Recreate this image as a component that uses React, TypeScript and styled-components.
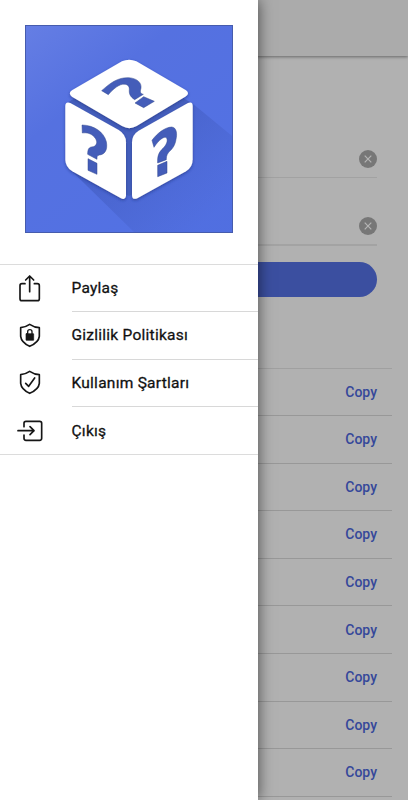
import React from "react";
import styled, { createGlobalStyle } from "styled-components";

const GlobalStyle = createGlobalStyle`
  * { box-sizing: border-box; }
  body { margin: 0; background: #b2b2b2; font-family: Roboto, sans-serif; overflow: hidden; }
`;

const Screen = styled.div`
  position: relative;
  width: 408px;
  height: 800px;
  overflow: hidden;
  background: #b1b1b1;
`;

const Header = styled.header`
  height: 56px;
  background: #ababab;
  box-shadow: 0 1px 3px rgba(0, 0, 0, 0.42);
`;

const Form = styled.section`
  padding: 0 31px;
`;

const Field = styled.div<{ $height: number; $strong?: boolean }>`
  display: flex;
  align-items: flex-end;
  justify-content: flex-end;
  height: ${(p) => p.$height}px;
  padding-bottom: ${(p) => (p.$strong ? 9 : 9)}px;
  border-bottom: ${(p) => (p.$strong ? "2px solid #a3a3a3" : "1px solid #a2a2a2")};
`;

const ClearButton = styled.button`
  display: flex;
  width: 18px;
  height: 18px;
  padding: 0;
  border: 0;
  border-radius: 50%;
  background: #777;
`;

const SubmitButton = styled.button`
  display: block;
  width: 100%;
  height: 35.5px;
  margin-top: 15.5px;
  padding: 0;
  border: 0;
  border-radius: 18px;
  background: #3b4fa0;
`;

const Results = styled.ul`
  list-style: none;
  margin: 71px 16px 0;
  padding: 0;
  border-top: 1px solid #a0a0a0;
`;

const ResultRow = styled.li`
  display: flex;
  align-items: center;
  justify-content: flex-end;
  height: 47.6px;
  padding: 0 15px 0 0;
  border-bottom: 1px solid #989898;

  &:first-child {
    height: 47px;
  }
`;

const CopyButton = styled.button`
  padding: 0;
  border: 0;
  background: none;
  color: #35489a;
  font: 500 14px/20px Roboto, sans-serif;
`;

const Drawer = styled.aside`
  position: absolute;
  top: 0;
  left: 0;
  width: 258px;
  height: 100%;
  background: #fff;
  box-shadow: 0 0 14px rgba(0, 0, 0, 0.6);
`;

const LogoFrame = styled.div`
  display: flex;
  padding: 25px 25px 31px;
`;

const Menu = styled.nav`
  border-top: 1px solid #dcdcdc;
  border-bottom: 1px solid #dcdcdc;
`;

const MenuItem = styled.a`
  display: flex;
  align-items: center;
  height: 47.6px;
  padding-left: 15px;
  color: #111;

  &:first-child {
    height: 47px;
  }

  &:last-child {
    height: 46.8px;
  }
`;

const MenuLabel = styled.span`
  display: flex;
  flex: 1;
  align-items: center;
  align-self: stretch;
  margin-left: 26.5px;
  font-size: 15.5px;
  font-weight: 400;
  letter-spacing: 0.25px;
  -webkit-text-stroke: 0.3px #111;
  ${MenuItem}:not(:last-child) > & {
    border-bottom: 1px solid #d8d8d8;
  }
`;

const MenuIcon = styled.svg`
  width: 30px;
  height: 30px;
  fill: none;
  stroke: #161616;
  stroke-width: 5;
  stroke-linecap: round;
  stroke-linejoin: round;
`;

const CloseGlyph = () => (
  <svg width="18" height="18" viewBox="0 0 18 18" fill="none" stroke="#b5b5b5" strokeWidth="1.2">
    <path d="M5.7 5.7 12.3 12.3M12.3 5.7 5.7 12.3" />
  </svg>
);

const CubeLogo = () => (
  <svg width="208" height="208" viewBox="15 15 624 624">
    <defs>
      <linearGradient id="sky" x1="0" y1="0" x2="0.8" y2="1">
        <stop offset="0" stopColor="#657ee4" />
        <stop offset="0.35" stopColor="#5571e0" />
        <stop offset="1" stopColor="#5271e4" />
      </linearGradient>
      <linearGradient id="cast" gradientUnits="userSpaceOnUse" x1="330" y1="350" x2="560" y2="600">
        <stop offset="0" stopColor="#354da8" stopOpacity="0.4" />
        <stop offset="1" stopColor="#4057b8" stopOpacity="0.08" />
      </linearGradient>
      <filter id="lift" x="-10%" y="-10%" width="120%" height="125%">
        <feDropShadow dx="0" dy="4" stdDeviation="4" floodColor="#1c3180" floodOpacity="0.65" />
      </filter>
    </defs>
    <rect x="15" y="15" width="624" height="624" fill="url(#sky)" />
    <path d="M142 440 345 639H639V350L515 248Z" fill="url(#cast)" />
    <path d="M145 246 327 140 510 246V430L327 528 145 430Z" fill="#4660bd" />
    <g fill="#fff" filter="url(#lift)">
      <path d="M306 124Q327 114 349 124L498 211Q510 220 498 229L350 318Q328 331 306 318L156 230Q143 220 156 211Z" />
      <path d="M136 257Q137 244 151 249L296 330Q318 343 318 367V526Q317 541 303 535L157 454Q137 442 136 420Z" />
      <path d="M504 249Q518 244 518 258V418Q518 442 498 454L352 535Q336 541 336 524V368Q336 344 356 332Z" />
    </g>
    <g fill="#445db9" stroke="#30478d" strokeWidth="1.5">
      <path d="M245 212C270 190 292 172 326 173C352 175 365 188 363 204C360 216 360 220 370 223L344 239C329 229 327 221 328 207C328 196 319 191 307 193C292 196 276 211 265 224Z" />
      <path d="M371 230 403 244 371 263 345 249Z" />
      <path d="M186 315C222 316 251 335 259 365C264 391 253 404 238 405C231 406 231 410 231 418L203 403C203 386 207 381 220 380C233 376 233 362 223 351C213 340 200 337 187 339Z" />
      <path d="M204 416 231 430V463L204 451Z" />
      <path d="M396 361C412 339 435 322 455 321C470 322 472 342 468 358C465 379 455 388 446 397C439 405 439 413 439 419L413 429C412 408 416 397 429 385C440 374 444 362 440 354C434 346 416 360 402 382Z" />
      <path d="M413 436 441 424V459L413 470Z" />
    </g>
    <rect x="16.5" y="16.5" width="621" height="621" fill="none" stroke="#465cad" strokeWidth="3" />
  </svg>
);

const SHIELD = "M89 191Q104 201 118 201V227Q116 245 89 257Q64 245 62 227V201Q76 200 89 191Z";

const menuItems = [
  {
    label: "Paylaş",
    icon: (
      <MenuIcon viewBox="45 39 90 90">
        <path d="M75 68H66Q60 68 60 74V113Q60 119 66 119H112Q118 119 118 113V74Q118 68 112 68H103M89 92V46M77 57 89 45 101 57" />
      </MenuIcon>
    ),
  },
  {
    label: "Gizlilik Politikası",
    icon: (
      <MenuIcon viewBox="45 181 90 90">
        <path d={SHIELD} />
        <path d="M83 219V213Q83 207 89.500 207Q96 207 96 213V219" strokeWidth="4" />
        <rect x="78" y="219" width="23" height="20" rx="1" fill="#161616" strokeWidth="2" />
      </MenuIcon>
    ),
  },
  {
    label: "Kullanım Şartları",
    icon: (
      <MenuIcon viewBox="45 181 90 90">
        <path d={SHIELD} />
        <path d="M77 227 86 236 104 211" />
      </MenuIcon>
    ),
  },
  {
    label: "Çıkış",
    icon: (
      <MenuIcon viewBox="45 166 90 90">
        <path d="M72 198V188Q72 182 78 182H119Q125 182 125 188V233Q125 239 119 239H78Q72 239 72 233V223M54 210H102M90 198 102 210 90 222" />
      </MenuIcon>
    ),
  },
];

export default function App() {
  return (
    <>
      <GlobalStyle />
      <Screen>
        <Header />
        <Form>
          <Field $height={122}>
            <ClearButton aria-label="Clear"><CloseGlyph /></ClearButton>
          </Field>
          <Field $height={68} $strong>
            <ClearButton aria-label="Clear"><CloseGlyph /></ClearButton>
          </Field>
          <SubmitButton aria-label="Submit" />
        </Form>
        <Results>
          {Array.from({ length: 9 }, (_, i) => (
            <ResultRow key={i}>
              <CopyButton>Copy</CopyButton>
            </ResultRow>
          ))}
        </Results>
        <Drawer>
          <LogoFrame><CubeLogo /></LogoFrame>
          <Menu>
            {menuItems.map((item) => (
              <MenuItem key={item.label}>
                {item.icon}
                <MenuLabel>{item.label}</MenuLabel>
              </MenuItem>
            ))}
          </Menu>
        </Drawer>
      </Screen>
    </>
  );
}
